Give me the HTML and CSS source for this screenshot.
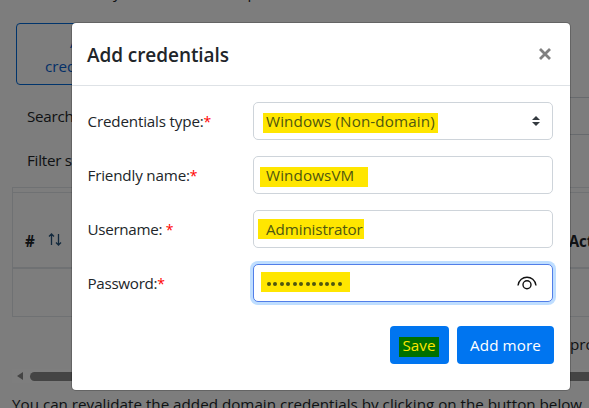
FILE: index.html
```html
<!DOCTYPE html>
<html lang="en">
<head>
<meta charset="utf-8">
<title>Add credentials</title>
<link rel="stylesheet" href="styles.css">
</head>
<body>
<main class="page">
  <p class="intro"><span>y</span><span>p</span></p>
  <button class="outline-btn">Add<br>credentials</button>
  <div class="search-row"><span class="page-label">Search</span><span class="search-input"></span></div>
  <div class="filter-row"><span class="page-label">Filter s</span></div>
  <div class="table">
    <div class="table-gap"></div>
    <div class="table-head"><b>#</b><svg class="sort" viewBox="0 0 14 13"><path d="M3.5 12V1M1 3.5 3.5 1 6 3.5M10.5 1v11M8 9.5l2.500 2.500 2.500-2.500"/></svg><b class="actions">Act</b></div>
    <div class="table-row"></div>
  </div>
  <div class="processing">pro</div>
  <div class="scrollbar"><span class="arrow"></span><span class="thumb"></span></div>
  <p class="note">You can revalidate the added domain credentials by clicking on the button below</p>
</main>
<div class="backdrop"></div>
<section class="dialog">
  <header class="dialog-head"><h1>Add credentials</h1><svg class="close" viewBox="0 0 12 12"><path d="m1 1 10 10M11 1 1 11"/></svg></header>
  <form class="dialog-body">
    <div class="field"><label class="l-type">Credentials type:<i>*</i></label><div class="control"><span class="mark m-type">Windows (Non-domain)</span><svg class="caret" viewBox="0 0 8 10"><path d="M0 4 4 0l4 4ZM0 6h8l-4 4Z"/></svg></div></div>
    <div class="field"><label class="l-name">Friendly name:<i>*</i></label><div class="control"><span class="mark m-name">WindowsVM</span></div></div>
    <div class="field"><label class="l-user">Username: <i>*</i></label><div class="control"><span class="mark m-user">Administrator</span></div></div>
    <div class="field"><label class="l-pass">Password:<i>*</i></label><div class="control focused"><span class="mark m-pass"><b></b><b></b><b></b><b></b><b></b><b></b><b></b><b></b><b></b><b></b><b></b><b></b></span><svg class="eye" viewBox="0 0 20 14"><path d="M1 9.500C2.500-1.500 17.500-1.500 19 9.500"/><circle cx="10" cy="8.800" r="4"/></svg></div></div>
    <div class="buttons"><button type="button" class="btn save"><span>Save</span></button><button type="button" class="btn more">Add more</button></div>
  </form>
</section>
</body>
</html>
```
FILE: styles.css
```css
* { box-sizing: border-box; }
body { margin: 0; width: 589px; height: 408px; overflow: hidden; position: relative; background: #fafafa; color: #212529; font: 15.2px/24px "Open Sans", "Noto Sans", sans-serif; }
p, h1 { margin: 0; }
button { font: inherit; }
.page { height: 408px; overflow: hidden; }
.intro { height: 24px; padding-left: 113px; margin-top: -20px; display: flex; gap: 127px; }
.outline-btn { display: block; margin: 19px 0 0 16px; width: 136px; height: 62px; padding: 0; border: 1px solid #0069d9; border-radius: 4px; background: none; color: #0761d1; line-height: 24px; }
.search-row { display: flex; align-items: center; height: 38px; margin-top: 12px; padding: 0 0 0 27px; }
.page-label { letter-spacing: -.25px; }
.search-input { margin-left: 270px; flex: 1; height: 38px; border: 1px solid #ced4da; border-right: 0; }
.filter-row { height: 52px; padding: 13px 0 0 27px; }
.table { border: 1px solid #dee2e6; border-right: 0; margin-left: 12px; height: 130px; }
.table-gap { height: 5px; border-bottom: 1px solid #dee2e6; }
.table-head { height: 76px; padding: 36px 0 0 12px; display: flex; border-bottom: 2px solid #dee2e6; }
.sort { flex: none; width: 14px; height: 13px; margin: 4px 0 0 13px; fill: none; stroke: #24527a; stroke-width: 1.3; }
.actions { margin-left: 507px; letter-spacing: -.2px; }
.processing { height: 52px; padding: 15px 0 0 570px; }
.scrollbar { height: 14px; margin: 0 0 0 12px; display: flex; align-items: center; background: #fcfcfc; }
.arrow { margin-left: 5px; border: 4px solid transparent; border-left: 0; border-right: 6px solid #888; }
.thumb { margin-left: 7px; flex: 1; height: 9px; border-radius: 5px 0 0 5px; background: #888; }
.note { padding-left: 12px; margin-top: 9px; white-space: nowrap; }
.backdrop { position: absolute; inset: 0; background: rgba(0,0,0,.5); }
.dialog { position: absolute; left: 72px; top: 23px; width: 498px; height: 367px; border-radius: 4px; background: #fff; box-shadow: 0 0 0 1px rgba(0,0,0,.2); }
.dialog-head { display: flex; justify-content: space-between; align-items: center; height: 63px; border-bottom: 1px solid #dee2e6; padding: 0 19px 0 15px; }
.dialog-head h1 { font-size: 19px; font-weight: 600; letter-spacing: -.07px; padding-top: 2px; }
.close { width: 12px; height: 12px; fill: none; stroke: #808080; stroke-width: 2.8; }
.dialog-body { padding: 16px 17px 0 16px; }
.field { display: flex; justify-content: space-between; margin-bottom: 16px; }
label { padding-top: 7px; white-space: pre; letter-spacing: -.17px; margin-left: -.5px; }
.l-user, .l-pass { letter-spacing: -.3px; }
label i { color: red; font-style: normal; font-size: 14px; }
.control { width: 300px; height: 38px; border: 1px solid #ced4da; border-radius: 5px; display: flex; align-items: flex-start; justify-content: space-between; background: #fff; }
.mark { height: 20px; line-height: 16px; background: #ffe600; color: #4f5710; white-space: nowrap; }
.m-type { width: 175px; margin: 10px 0 0 9px; padding-left: 3px; letter-spacing: .12px; }
.m-name { width: 108px; margin: 10px 0 0 6px; padding-left: 6px; letter-spacing: .12px; }
.m-user { width: 106px; margin: 8px 0 0 4px; padding-left: 8px; line-height: 20px; letter-spacing: -.1px; }
.m-pass { width: 89px; margin: 7px 0 0 7px; padding: 10px 0 0 6px; display: flex; gap: 2.450px; }
.m-pass b { width: 4px; height: 4px; border-radius: 50%; background: #4f5710; }
.focused { border-color: #527ee8; box-shadow: 0 0 0 3px #bfdeff; }
.caret { width: 8px; height: 10px; margin: 13px 12px 0 0; fill: #343a40; }
.eye { width: 20px; height: 14px; margin: 11px 15px 0 0; fill: none; stroke: #111; stroke-width: 1.4; }
.buttons { display: flex; justify-content: flex-end; gap: 8px; margin: 24px -1px 0 0; }
.btn { height: 38px; border: 0; border-radius: 4px; background: #0075f0; color: #fff; padding: 0; }
.save { width: 59px; }
.save span { display: block; width: 40px; height: 20px; line-height: 17px; margin: 4px 0 0 9px; background: #007000; color: #ffe600; }
.more { width: 97px; letter-spacing: .1px; }
```
